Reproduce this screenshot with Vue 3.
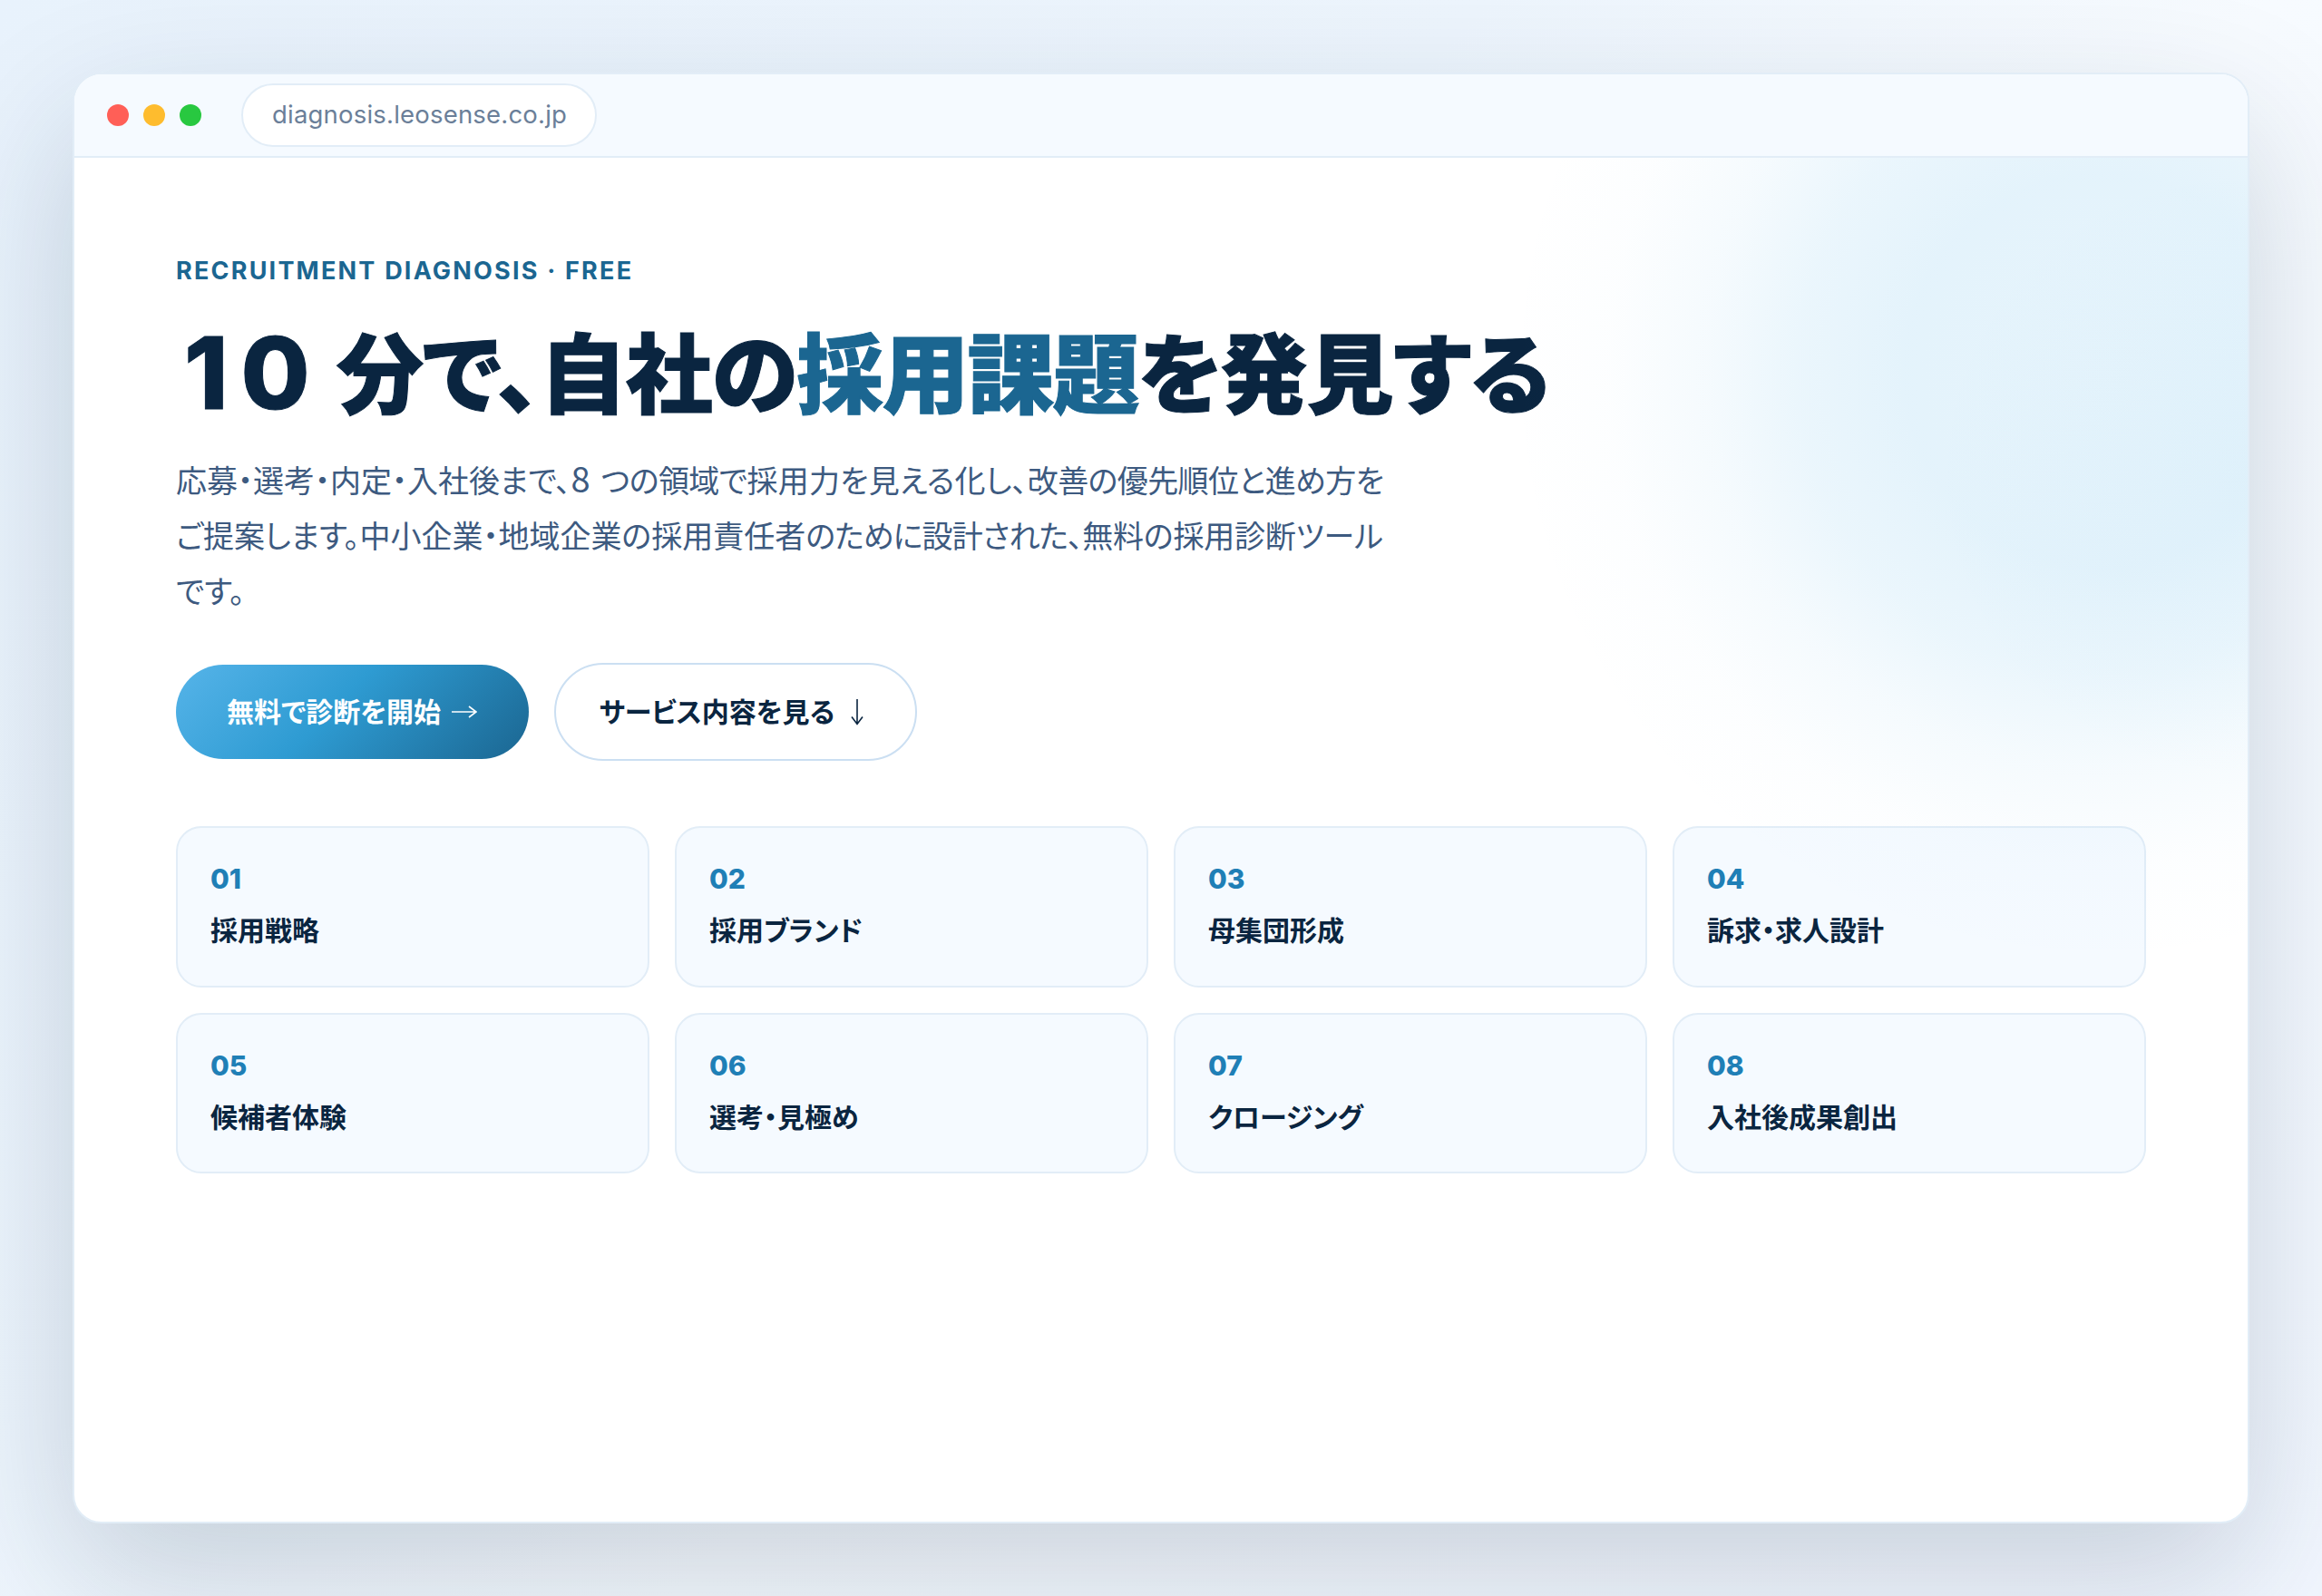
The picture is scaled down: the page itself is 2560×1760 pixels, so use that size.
<script setup>
const domains = [
  '採用戦略', '採用ブランド', '母集団形成', '訴求・求人設計',
  '候補者体験', '選考・見極め', 'クロージング', '入社後成果創出',
]
// Each line is a list of [text, tracking class] runs.
const lines = [
  [['応募・選考・内定・入社後まで、', ''], ['8', 'digit'], ['つの領域で', 'snug'], ['採用力を見える化し、', 'loose'], ['改善の優先順位と進め方を', 'snug']],
  [['ご提案します。中小企業・地域企業の採用責任者', ''], ['のために設計された、', 'tight'], ['無料の採用診断ツール', 'even']],
  [['です。', '']],
]
</script>

<template>
  <div class="stage">
    <div class="window">
      <header class="bar">
        <i class="dot red"></i><i class="dot amber"></i><i class="dot green"></i>
        <div class="url"><span>diagnosis.leosense.co.jp</span></div>
      </header>
      <main class="body">
        <div class="eyebrow"><span>RECRUITMENT DIAGNOSIS · FREE</span></div>
        <h1><span class="num">10</span><span>分で、自社の<em>採用課題</em>を発見する</span></h1>
        <p class="lead">
          <span v-for="(line, i) in lines" :key="i"><span v-for="run in line" :key="run[0]" :class="run[1]">{{ run[0] }}</span></span>
        </p>
        <div class="actions">
          <a class="btn primary"><span>無料で診断を開始</span>
            <svg width="28" height="30" viewBox="0 0 28 30"><path d="M0 15H27M19 9L27 15L19 21" /></svg>
          </a>
          <a class="btn ghost"><span>サービス内容を見る</span>
            <svg width="16" height="30" viewBox="0 0 16 30"><path d="M8 1V28.5M2 20.5L8 28.5L14 20.5" /></svg>
          </a>
        </div>
        <div class="grid">
          <div v-for="(d, i) in domains" :key="d" class="card">
            <b>0{{ i + 1 }}</b>
            <span>{{ d }}</span>
          </div>
        </div>
        <div class="glow"></div>
      </main>
    </div>
  </div>
</template>

<style>
body { margin: 0; }
</style>

<style scoped>
.stage {
  box-sizing: border-box;
  width: 2560px;
  height: 1760px;
  padding: 80px;
  overflow: hidden;
  background: linear-gradient(135deg, #e8f2fc 0%, #edf5fd 38%, #f7fbff 58%, #f2f7ff 100%);
  font-family: "Noto Sans CJK JP", sans-serif;
  font-feature-settings: "palt";
  color: #0a2540;
}
.window {
  box-sizing: border-box;
  display: flex;
  flex-direction: column;
  height: 1600px;
  border: 2px solid #e2edf7;
  border-radius: 32px;
  background: #fff;
  overflow: hidden;
  box-shadow: 0 60px 160px rgba(10, 37, 64, 0.19);
}
.bar {
  box-sizing: border-box;
  display: flex;
  align-items: center;
  gap: 16px;
  flex: none;
  height: 92px;
  padding-left: 36px;
  background: #f5faff;
  border-bottom: 2px solid #e2edf7;
}
.dot { width: 24px; height: 24px; border-radius: 50%; }
.red { background: #ff5f57; }
.amber { background: #febc2e; }
.green { background: #28c840; }
.url {
  box-sizing: border-box;
  display: flex;
  align-items: center;
  width: 392px;
  height: 70px;
  margin-left: 28px;
  padding: 0 0 2px 32px;
  border: 2px solid #e2edf7;
  border-radius: 35px;
  background: #fff;
  color: #6b7f99;
  font-family: Inter, sans-serif;
  font-size: 27.5px;
  letter-spacing: 0.2px;
  white-space: nowrap;
}
.body {
  position: relative;
  flex: 1;
  padding: 97px 112px 0;
}
.eyebrow {
  height: 56px;
  line-height: 56px;
  color: #1b6691;
  font-family: Inter, sans-serif;
  font-size: 27px;
  font-weight: 700;
  letter-spacing: 2.2px;
  white-space: nowrap;
}
h1 {
  display: flex;
  height: 125px;
  margin: 17px 0 0;
  font-size: 96px;
  font-weight: 900;
  line-height: 125px;
  letter-spacing: -1.1px;
  white-space: nowrap;
  -webkit-text-stroke: 1px currentColor;
}
h1 em { font-style: normal; color: #1b6691; letter-spacing: -1.92px; }
.num {
  box-sizing: border-box;
  width: 177px;
  padding: 5px 0 0 9px;
  font-family: Inter, sans-serif;
  font-size: 110px;
  font-weight: 800;
  letter-spacing: 14px;
}
.lead {
  display: flex;
  flex-direction: column;
  margin: 28.9px 0 49.5px;
  color: #3d5a80;
  font-size: 34px;
  line-height: 61.2px;
  white-space: nowrap;
}
.digit { margin-right: 12px; font-size: 38px; line-height: 1; }
.snug { letter-spacing: -0.62px; }
.loose { letter-spacing: 0.2px; }
.tight { letter-spacing: -0.85px; }
.even { letter-spacing: -0.2px; }
.actions {
  display: flex;
  align-items: center;
  gap: 28px;
  height: 108px;
}
.btn {
  box-sizing: border-box;
  display: flex;
  align-items: center;
  border-radius: 54px;
  font-size: 30px;
  font-weight: 700;
  white-space: nowrap;
}
.btn span { padding-bottom: 5px; }
.btn svg { fill: none; stroke: currentColor; stroke-width: 1.6; }
.primary {
  width: 389px;
  height: 104px;
  padding-left: 56px;
  color: #fff;
  background: linear-gradient(135deg, #56b4e9 0%, #2e9bd2 45%, #1b6691 100%);
}
.primary svg { margin-left: 12px; }
.ghost {
  width: 400px;
  height: 108px;
  padding-left: 47.5px;
  border: 2px solid #cbdff2;
  background: #fff;
}
.ghost svg { margin-left: 16.5px; }
.grid {
  display: grid;
  grid-template-columns: repeat(4, 1fr);
  gap: 28px;
  margin-top: 72px;
}
.card {
  box-sizing: border-box;
  display: flex;
  flex-direction: column;
  height: 177.6px;
  padding: 34px 36px;
  border: 2px solid #e2edf7;
  border-radius: 28px;
  background: #f5faff;
}
.card b {
  height: 44px;
  line-height: 44px;
  color: #1f7fb6;
  font-family: Inter, sans-serif;
  font-size: 30px;
  font-weight: 800;
}
.card span {
  margin-top: 8px;
  font-size: 30px;
  font-weight: 700;
  line-height: 50px;
}
.glow {
  position: absolute;
  inset: 0;
  pointer-events: none;
  background:
    radial-gradient(circle 340px at 2390px 350px, rgba(86, 180, 233, 0.04) 0%, rgba(86, 180, 233, 0.025) 50%, rgba(86, 180, 233, 0) 100%),
    radial-gradient(circle 680px at 2235px 235px,
    rgba(86, 180, 233, 0.15) 0%, rgba(86, 180, 233, 0.16) 32%,
    rgba(86, 180, 233, 0.12) 49%, rgba(86, 180, 233, 0.06) 64%,
    rgba(86, 180, 233, 0.016) 80%, rgba(86, 180, 233, 0) 96%);
}
</style>
